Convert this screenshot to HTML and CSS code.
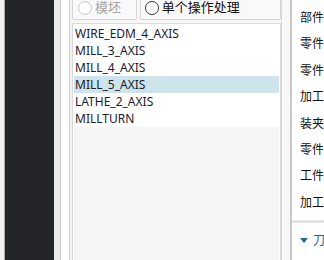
FILE: index.html
```html
<!DOCTYPE html>
<html lang="zh">
<head>
    <meta charset="UTF-8">
    <title>操作处理</title>
    <link rel="stylesheet" href="styles.css">
</head>
<body>
    <div class="edge"></div>
    <div class="dark"></div>
    <div class="gutter"></div>
    <div class="strip"></div>
    <div class="strip2"></div>
    <div class="panel">
        <div class="radios">
            <label class="radio-box small disabled"><span class="dot"></span>模坯</label>
            <label class="radio-box wide"><span class="dot"></span>单个操作处理</label>
        </div>
        <div class="list">
            <div class="item">WIRE_EDM_4_AXIS</div>
            <div class="item">MILL_3_AXIS</div>
            <div class="item">MILL_4_AXIS</div>
            <div class="item selected">MILL_5_AXIS</div>
            <div class="item">LATHE_2_AXIS</div>
            <div class="item">MILLTURN</div>
            <div class="list-rest"></div>
        </div>
    </div>
    <div class="split"></div>
    <div class="side">
        <div class="props">
            <div class="prop">部件导航器</div>
            <div class="prop">零件名称</div>
            <div class="prop">零件编号</div>
            <div class="prop">加工方式</div>
            <div class="prop">装夹方式</div>
            <div class="prop">零件材料</div>
            <div class="prop">工件尺寸</div>
            <div class="prop">加工时间</div>
        </div>
        <div class="section"><span class="caret"></span>刀具</div>
    </div>
</body>
</html>
```

FILE: styles.css
```css
html, body {
    margin: 0;
    padding: 0;
}
body {
    width: 324px;
    height: 260px;
    overflow: hidden;
    display: flex;
    font-family: "Noto Sans", "Noto Sans CJK SC", sans-serif;
    font-size: 12px;
    background: #f7f7f7;
}
.edge {
    width: 4px;
    background: #f0f0f0;
    border-right: 1px solid #a9a9a9;
}
.dark {
    width: 49px;
    background: #232428;
}
.gutter {
    width: 6px;
    background: #ebebeb;
    border-right: 1px solid #c6c6c6;
}
.strip {
    width: 8px;
    background: #fff;
    border-right: 1px solid #cfcfcf;
}
.strip2 {
    width: 2px;
    background: #f3f3f3;
}
.panel {
    width: 209px;
    display: flex;
    flex-direction: column;
    gap: 3px;
    background: #f7f7f7;
}
.radios {
    display: flex;
    gap: 3px;
    height: 26px;
    margin-top: -6px;
}
.radio-box {
    display: flex;
    align-items: flex-start;
    padding-top: 6px;
    box-sizing: border-box;
    border: 1px solid #d6d6d6;
    border-radius: 2px;
    background: #f9f9f9;
    color: #111;
    font-size: 13px;
    line-height: 13px;
}
.radio-box.small {
    width: 65px;
    padding-left: 5px;
}
.radio-box.wide {
    width: 142px;
    padding-left: 4px;
}
.radio-box.disabled {
    color: #a6a6a6;
}
.dot {
    width: 12px;
    height: 12px;
    border: 1px solid #333;
    border-radius: 50%;
    margin-right: 3px;
    background: #fff;
}
.disabled .dot {
    border-color: #c4c4c4;
}
.list {
    flex: 1;
    border: 1px solid #d9d9d9;
    border-bottom: none;
    padding: 1px 1px 0;
    display: flex;
    flex-direction: column;
    background: #fff;
}
.item {
    height: 17px;
    line-height: 17px;
    padding-left: 1px;
    color: #1b1b2a;
}
.item.selected {
    background: #cde5ea;
}
.list-rest {
    flex: 1;
    background: #f5f5f5;
}
.split {
    width: 8px;
    border-left: 1px solid #d8d8d8;
    background: #f7f7f7;
    border-right: 2px solid #c9c9c9;
}
.side {
    flex: 1;
    background: #fff;
    overflow: hidden;
    white-space: nowrap;
}
.props {
    padding: 5px 0 0 8px;
    height: 223px;
    box-sizing: border-box;
    border-bottom: 3px solid #e3e3e3;
}
.prop {
    height: 26.4px;
    line-height: 26px;
    color: #111;
}
.section {
    display: flex;
    align-items: center;
    padding: 8px 0 0 8px;
    color: #1b6a8a;
}
.caret {
    width: 0;
    height: 0;
    border-left: 4px solid transparent;
    border-right: 4px solid transparent;
    border-top: 5px solid #1b6a8a;
    margin-right: 5px;
}
```
